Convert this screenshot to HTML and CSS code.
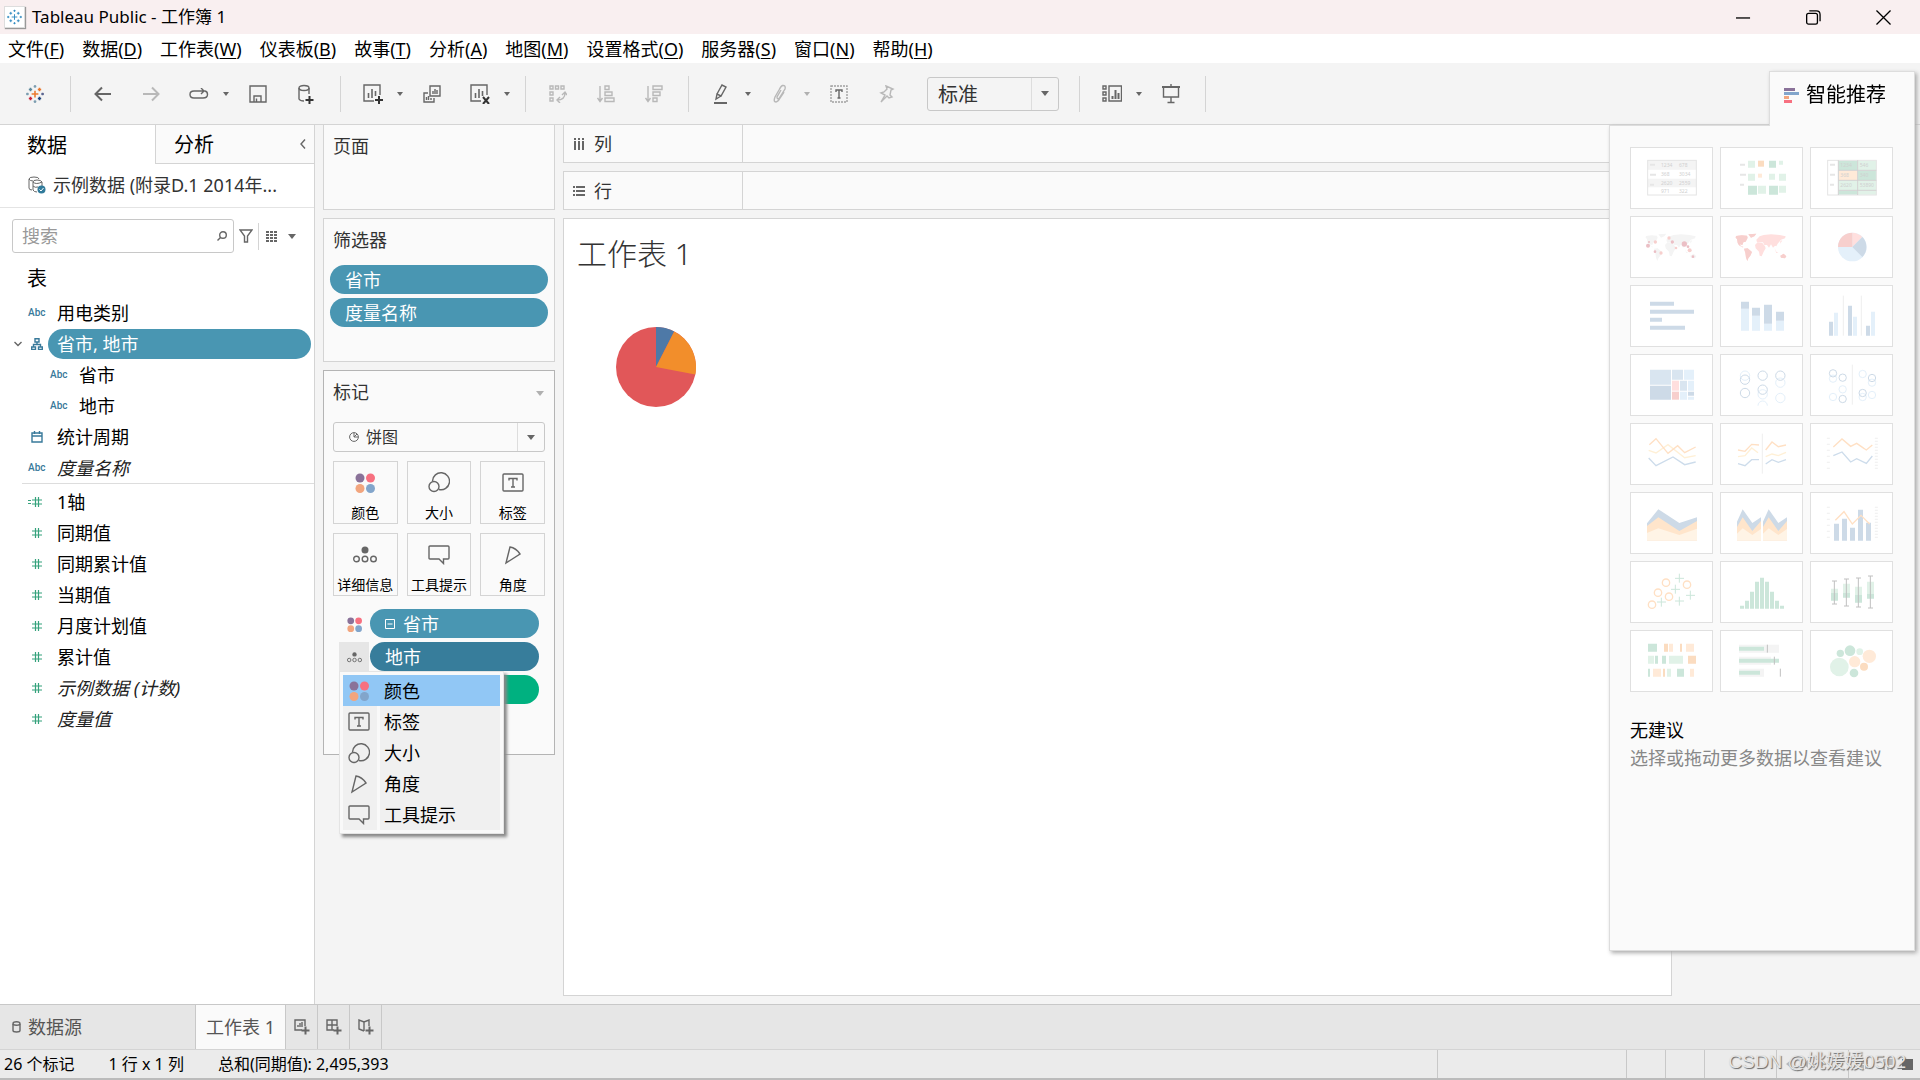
FILE: index.html
```html
<!DOCTYPE html>
<html lang="zh-CN">
<head>
  <meta charset="UTF-8" />
  <meta name="viewport" content="width=device-width, initial-scale=1.0"/>
  <title>Tableau Public - 工作簿 1</title>
  <link rel="stylesheet" href="styles.css">
</head>
<body>

  <!-- Shared icons -->
  <svg class="defs" width="0" height="0">
    <symbol id="i-color" viewBox="0 0 20 20">
      <g stroke="none">
        <circle cx="5" cy="5" r="4.500" fill="#8a7299"/><circle cx="15.500" cy="5" r="4.500" fill="#f77080"/>
        <circle cx="5" cy="15.500" r="4.500" fill="#f2a57e"/><circle cx="15.500" cy="15.500" r="4.500" fill="#82a5cb"/>
      </g>
    </symbol>
    <symbol id="i-size" viewBox="0 0 22 22">
      <path d="M4.500 10A8.500 8.500 0 1 1 11 18.500" /><circle cx="6" cy="15.500" r="5"/>
    </symbol>
    <symbol id="i-label" viewBox="0 0 22 20">
      <rect x="1" y="1" width="20" height="17" rx="1"/><path d="M7 7.500V5.500H15V7.500M11 5.500V14M9 14H13"/>
    </symbol>
    <symbol id="i-tip" viewBox="0 0 22 20">
      <path d="M2 1H20Q21 1 21 2V13Q21 14 20 14H15.500V18.500L11 14H2Q1 14 1 13V2Q1 1 2 1Z"/>
    </symbol>
    <symbol id="i-angle" viewBox="0 0 22 20">
      <path d="M8 2L4 18L18 9Q14 3 8 2Z"/>
    </symbol>
    <symbol id="i-detail" viewBox="0 0 24 20">
      <circle cx="12" cy="5" r="3.500" fill="#666" stroke="none"/><circle cx="3.500" cy="14" r="2.800"/><circle cx="12" cy="14" r="2.800"/><circle cx="20.500" cy="14" r="2.800"/>
    </symbol>
    <symbol id="i-hash" viewBox="0 0 18 12">
      <path d="M4 4H14M4 8H14M7.500 1V11M10.500 1V11"/>
    </symbol>
    <symbol id="i-marks" viewBox="0 0 16 16">
      <path d="M8 5V11M5 8H11M4 2.500V5.500M2.500 4H5.500M12 2.500V5.500M10.500 4H13.500M4 10.500V13.500M2.500 12H5.500M12 10.500V13.500M10.500 12H13.500M8 0V2.500M6.800 1.300H9.200M8 13.500V16M6.800 14.700H9.200M1.300 6.800V9.200M0 8H2.500M14.700 6.800V9.200M13.500 8H16"/>
    </symbol>
    <symbol id="i-world" viewBox="0 0 243 180">
      <path d="M45 57L62 55L78 56L80 62L74 74L67 76L64 84L56 82L60 88L68 90L64 91L54 85L50 78L48 66L44 62Z"/>
      <path d="M82 52L106 50L100 58L90 62Z"/>
      <path d="M69 95L80 94L93 105L88 116L82 124L79 132L75 122L73 108Z"/>
      <path d="M110 76L124 78L132 88L134 94L128 104L122 118L116 116L114 104L104 94L102 84Z"/>
      <path d="M106 68L116 58L128 54L150 52L176 54L194 58L192 64L180 68L170 80L166 88L162 86L156 92L150 82L144 92L138 84L130 84L126 76L108 76Z"/>
      <path d="M160 92L166 104L172 108L166 108ZM178 116L188 110L196 118L192 124L180 122ZM178 72L184 70L178 80Z"/>
    </symbol>
  </svg>

  <!-- Title bar -->
  <header class="titlebar">
    <svg class="app-icon" viewBox="0 0 16 16"><use href="#i-marks"/></svg>
    <h1>Tableau Public - 工作簿 1</h1>
    <div class="window-controls">
      <button aria-label="最小化"><svg viewBox="0 0 16 16"><path d="M0 8.500H15"/></svg></button>
      <button aria-label="还原"><svg viewBox="0 0 16 16"><rect x="0.700" y="3.500" width="11.500" height="11.500" rx="2"/><path d="M3.500 1H11Q15 1 15 5V12"/></svg></button>
      <button aria-label="关闭"><svg viewBox="0 0 16 16"><path d="M0.500 0.500L15.500 15.500M15.500 0.500L0.500 15.500"/></svg></button>
    </div>
  </header>

  <!-- Menu -->
  <nav class="menubar">
    <button>文件(<u>F</u>)</button>
    <button>数据(<u>D</u>)</button>
    <button>工作表(<u>W</u>)</button>
    <button>仪表板(<u>B</u>)</button>
    <button>故事(<u>T</u>)</button>
    <button>分析(<u>A</u>)</button>
    <button>地图(<u>M</u>)</button>
    <button>设置格式(<u>O</u>)</button>
    <button>服务器(<u>S</u>)</button>
    <button>窗口(<u>N</u>)</button>
    <button>帮助(<u>H</u>)</button>
  </nav>

  <!-- Toolbar -->
  <div class="toolbar">
    <div class="group start">
      <button aria-label="开始"><svg width="18" height="20" viewBox="0 0 16 16">
        <path d="M8 5V11M5 8H11" stroke="#eb7a2e"/><path d="M4 2.500V5.500M2.500 4H5.500" stroke="#5b879b"/><path d="M12 2.500V5.500M10.500 4H13.500" stroke="#e8762c"/>
        <path d="M4 10.500V13.500M2.500 12H5.500" stroke="#c72037"/><path d="M12 10.500V13.500M10.500 12H13.500" stroke="#1f447c"/>
        <path d="M8 0V2.500M6.800 1.300H9.200M8 13.500V16M6.800 14.700H9.200M1.300 6.800V9.200M0 8H2.500" stroke="#7c9db0"/><path d="M14.700 6.800V9.200M13.500 8H16" stroke="#5b6591"/>
      </svg></button>
    </div>
    <div class="group">
      <button aria-label="撤消"><svg width="18" height="16" viewBox="0 0 18 16"><path stroke-width="2" d="M17 8H2M8 1.500L1.500 8L8 14.500"/></svg></button>
      <button class="off" aria-label="重做"><svg width="18" height="16" viewBox="0 0 18 16"><path stroke-width="2" d="M1 8H16M10 1.500L16.500 8L10 14.500"/></svg></button>
      <button aria-label="恢复"><svg width="20" height="12" viewBox="0 0 20 12"><path d="M11 3H5Q1 3 1 6.500T5 10H14Q18.500 10 18.500 6.500Q18.500 3.500 16 3H11M12 0L15 3L12 6"/></svg></button>
      <button class="caret" aria-label="恢复选项"></button>
      <button aria-label="保存"><svg width="18" height="18" viewBox="0 0 18 18"><path d="M1 1H17V17H1ZM5 17V11H12V17M7.500 13.500V17"/></svg></button>
      <button aria-label="新建数据源"><svg width="18" height="20" viewBox="0 0 18 20"><ellipse cx="7" cy="4" rx="5" ry="2.500"/><path d="M2 4V15Q3 17 7 17M12 4V10"/><path stroke="#333" stroke-width="2" d="M12.500 12V20M8.500 16H16.500"/></svg></button>
    </div>
    <div class="group">
      <button aria-label="新建工作表"><svg width="20" height="20" viewBox="0 0 20 20"><path d="M11 17H1V1H17V11"/><path stroke-width="1.600" d="M5.500 14V9M9 14V5M12.500 12V7"/><path stroke="#333" stroke-width="2" d="M16 12V20M12 16H20"/></svg></button>
      <button class="caret" aria-label="新建选项"></button>
      <button aria-label="复制"><svg width="18" height="18" viewBox="0 0 18 18"><path d="M7 1H17V11H7ZM5 8H1V17H11V13M10 9V6M12 9V4M14 9V5M3.500 15V12M5.500 15V11M8 15V13"/></svg></button>
      <button aria-label="清除工作表"><svg width="20" height="20" viewBox="0 0 20 20"><path d="M11 17H1V1H17V11"/><path stroke-width="1.600" d="M5.500 14V9M9 14V5M12.500 12V7"/><path stroke="#333" stroke-width="2" d="M13 13L19 20M19 13L13 20"/></svg></button>
      <button class="caret" aria-label="清除选项"></button>
    </div>
    <div class="group">
      <button class="off" aria-label="交换行和列"><svg width="18" height="18" viewBox="0 0 18 18"><path d="M1 1H4V4H1ZM6.500 1H9.500V4H6.500ZM12 1H15V4H12ZM1 7H4V10H1ZM1 13H4V16H1ZM8 15Q16 15 16 8M11 12L8 15L11 18M13 10L16 7L18 10"/></svg></button>
      <button class="off" aria-label="升序排序"><svg width="18" height="18" viewBox="0 0 18 18"><path d="M3 1V16M0.500 13L3 16.500L5.500 13M8 1H12V4.500H8ZM8 7H15V10.500H8ZM8 13H17V16.500H8Z"/></svg></button>
      <button class="off" aria-label="降序排序"><svg width="18" height="18" viewBox="0 0 18 18"><path d="M3 1V16M0.500 13L3 16.500L5.500 13M8 1H17V4.500H8ZM8 7H15V10.500H8ZM8 13H12V16.500H8Z"/></svg></button>
    </div>
    <div class="group">
      <button aria-label="突出显示"><svg width="16" height="20" viewBox="0 0 16 20"><path d="M4 10L9 1L13 3L8 12L4 10L3 15L8 12M3 15"/><path stroke-width="2" d="M1 19H14"/></svg></button>
      <button class="caret" aria-label="突出显示选项"></button>
      <button class="off" aria-label="组成员"><svg width="16" height="20" viewBox="0 0 16 20"><path d="M9 6L5 13Q5 15.500 7 14.500L13 5Q14 1 10.500 1.500Q9 2 7 6L3 13Q1 18 4 18Q6 18 8 14L12 8"/></svg></button>
      <button class="caret off" aria-label="组选项"></button>
      <button aria-label="显示标记标签"><svg width="18" height="18" viewBox="0 0 18 18"><rect x="1" y="1" width="16" height="16" stroke="#a0a0a0" stroke-dasharray="2 1"/><path d="M6 7V5H12V7M9 5V13M7.500 13H10.500"/></svg></button>
      <button class="off" aria-label="固定轴"><svg width="16" height="18" viewBox="0 0 16 18"><path d="M7 1L14 4L12 5L11 10L13 12L10 13L8 11L2 17L6 10L2 8L5 7L8 4Z"/></svg></button>
      <div class="select fit">
        <select aria-label="适合"><option>标准</option></select>
      </div>
    </div>
    <div class="group">
      <button aria-label="显示卡"><svg width="20" height="18" viewBox="0 0 20 18"><path d="M1 1H4V4H1ZM1 7H4V10H1ZM1 13H4V16H1ZM7 1H19.500V16H7Z"/><path stroke-width="2" d="M10.500 14V11M13.500 14V5M16.500 14V8"/></svg></button>
      <button class="caret" aria-label="卡选项"></button>
      <button aria-label="演示模式"><svg width="18" height="20" viewBox="0 0 18 20"><path stroke-width="2" d="M0 3H18"/><path d="M9 0V2M1.500 3V13H16.500V3M9 13V18M5.500 18.500H12.500"/></svg></button>
    </div>
  </div>

  <!-- Workspace -->
  <main class="workspace">

    <aside class="data-pane">
      <div class="pane-tabs">
        <button class="active">数据</button>
        <button>分析</button>
        <svg width="6" height="10" viewBox="0 0 6 10"><path d="M5 0.500L1 5L5 9.500"/></svg>
      </div>
      <div class="source">
        <svg width="18" height="18" viewBox="0 0 18 18"><path d="M11 3Q11 1 6 1T1 3V12Q1 14 4 14M1 3Q2 5 5 5M5 6Q5 4 9 4T14 6V10M5 6V14Q6 16 9 16M5 6Q8 9 14 6M5 10Q7 12 10 11"/><circle cx="13.500" cy="13.500" r="4" fill="#317b9b" stroke="none"/><path stroke="#fff" d="M11.500 13.500L13 15L15.500 12"/></svg>
        <span>示例数据 (附录D.1 2014年...</span>
      </div>
      <div class="search-row">
        <div class="search">
          <input type="text" placeholder="搜索" aria-label="搜索">
          <svg width="10" height="10" viewBox="0 0 10 10"><circle cx="6" cy="4" r="3.300"/><path d="M3.500 6.500L0.500 9.500"/></svg>
        </div>
        <button aria-label="筛选字段"><svg width="14" height="14" viewBox="0 0 14 14"><path d="M1 1H13L8.500 7V13H5.500V7Z"/></svg></button>
        <button class="view" aria-label="查看方式"><svg width="12" height="11" viewBox="0 0 12 11"><path stroke-width="2" stroke-dasharray="3 1" d="M0 1H12M0 4H12M0 7H12M0 10H12"/></svg></button>
        <button class="caret" aria-label="菜单"></button>
      </div>

      <h2>表</h2>
      <ul class="fields">
        <li><i class="abc">Abc</i><span>用电类别</span></li>
        <li class="selected">
          <svg class="chevron" width="8" height="6" viewBox="0 0 8 6"><path d="M0.500 1L4 4.500L7.500 1"/></svg>
          <svg class="dim" width="12" height="12" viewBox="0 0 12 12"><path d="M4 0.700H8V4H4ZM6 4V6.500M2.500 9V6.500H9.500V9M0.700 9H4.500V11.500H0.700ZM7.500 9H11.300V11.500H7.500Z"/></svg>
          <span>省市, 地市</span>
        </li>
        <li class="child"><i class="abc">Abc</i><span>省市</span></li>
        <li class="child"><i class="abc">Abc</i><span>地市</span></li>
        <li><svg class="dim" width="12" height="12" viewBox="0 0 12 12"><path d="M1 2H11V11H1ZM1 5H11M3.500 0V3M8.500 0V3"/></svg><span>统计周期</span></li>
        <li class="italic"><i class="abc">Abc</i><span>度量名称</span></li>
      </ul>
      <ul class="fields measures">
        <li><svg class="mea" width="18" height="12" viewBox="0 0 18 12"><use href="#i-hash"/><path d="M0 4.500H3M0 7.500H3"/></svg><span>1轴</span></li>
        <li><svg class="mea" width="18" height="12"><use href="#i-hash"/></svg><span>同期值</span></li>
        <li><svg class="mea" width="18" height="12"><use href="#i-hash"/></svg><span>同期累计值</span></li>
        <li><svg class="mea" width="18" height="12"><use href="#i-hash"/></svg><span>当期值</span></li>
        <li><svg class="mea" width="18" height="12"><use href="#i-hash"/></svg><span>月度计划值</span></li>
        <li><svg class="mea" width="18" height="12"><use href="#i-hash"/></svg><span>累计值</span></li>
        <li class="italic"><svg class="mea" width="18" height="12"><use href="#i-hash"/></svg><span>示例数据 (计数)</span></li>
        <li class="italic"><svg class="mea" width="18" height="12"><use href="#i-hash"/></svg><span>度量值</span></li>
      </ul>
    </aside>

    <section class="cards">
      <div class="card pages"><h3>页面</h3></div>

      <div class="card filters">
        <h3>筛选器</h3>
        <button class="pill">省市</button>
        <button class="pill">度量名称</button>
      </div>

      <div class="card marks">
        <div class="marks-head"><h3>标记</h3><button class="caret off" aria-label="标记菜单"></button></div>
        <div class="select mark-type">
          <svg width="10" height="10" viewBox="0 0 10 10"><circle cx="5" cy="5" r="4.400"/><path d="M5 1V5H9M5 5L8 2"/></svg>
          <select aria-label="标记类型"><option>饼图</option></select>
        </div>
        <div class="mark-buttons">
          <button><svg width="20" height="20"><use href="#i-color"/></svg>颜色</button>
          <button><svg width="22" height="22"><use href="#i-size"/></svg>大小</button>
          <button><svg width="22" height="20"><use href="#i-label"/></svg>标签</button>
          <button><svg width="24" height="20"><use href="#i-detail"/></svg>详细信息</button>
          <button><svg width="22" height="20"><use href="#i-tip"/></svg>工具提示</button>
          <button><svg width="22" height="20"><use href="#i-angle"/></svg>角度</button>
        </div>
        <div class="encodings">
          <div class="encoding">
            <button class="role" aria-label="颜色"><svg width="15" height="15"><use href="#i-color"/></svg></button>
            <button class="pill"><svg width="10" height="10" viewBox="0 0 10 10"><path d="M0.500 0.500H9.500V9.500H0.500ZM2.500 5H7.500"/></svg>省市</button>
          </div>
          <div class="encoding">
            <button class="role open" aria-label="详细信息"><svg width="15" height="13"><use href="#i-detail"/></svg></button>
            <button class="pill dark">地市</button>
            <ul class="popup">
              <li class="hover"><button><svg width="20" height="20"><use href="#i-color"/></svg><span>颜色</span></button></li>
              <li><button><svg width="22" height="20"><use href="#i-label"/></svg><span>标签</span></button></li>
              <li><button><svg width="22" height="22"><use href="#i-size"/></svg><span>大小</span></button></li>
              <li><button><svg width="22" height="20"><use href="#i-angle"/></svg><span>角度</span></button></li>
              <li><button><svg width="22" height="20"><use href="#i-tip"/></svg><span>工具提示</span></button></li>
            </ul>
          </div>
          <div class="encoding">
            <button class="role" aria-label="角度"></button>
            <button class="pill green" aria-label="总和(同期值)"></button>
          </div>
        </div>
      </div>
    </section>

    <section class="view-area">
      <div class="shelf">
        <div class="shelf-name"><svg width="12" height="12" viewBox="0 0 12 12"><path stroke-width="2" d="M2 0V2M6 0V2M10 0V2M2 3V12M6 3V12M10 3V12"/></svg>列</div>
      </div>
      <div class="shelf">
        <div class="shelf-name"><svg width="12" height="12" viewBox="0 0 12 12"><path stroke-width="2" d="M0 2H2M0 6H2M0 10H2M3 2H12M3 6H12M3 10H12"/></svg>行</div>
      </div>
      <div class="sheet">
        <h2>工作表 1</h2>
        <svg class="pie" width="80" height="80" viewBox="-40 -40 80 80">
          <circle r="40" fill="#e15759"/>
          <path fill="#4e79a7" d="M0 0V-40A40 40 0 0 1 18.200 -35.600Z"/>
          <path fill="#f28e2b" d="M0 0L18.200 -35.600A40 40 0 0 1 39.300 7.600Z"/>
        </svg>
      </div>
    </section>
  </main>

  <!-- Sheet tabs -->
  <div class="sheet-tabs">
    <button class="datasource"><svg width="9" height="12" viewBox="0 0 9 12"><path d="M1 3V9.500Q1 11 4.500 11T8 9.500V3"/><ellipse cx="4.500" cy="2.500" rx="3.500" ry="1.800"/></svg>数据源</button>
    <button class="active">工作表 1</button>
    <button class="new" aria-label="新建工作表"><svg width="16" height="16" viewBox="0 0 16 16"><path d="M8 11H1V1H11V7M4 8V6M6 8V4M8 8V3"/><path stroke-width="2" d="M11.500 7.500V15.500M7.500 11.500H15.500"/></svg></button>
    <button class="new" aria-label="新建仪表板"><svg width="16" height="16" viewBox="0 0 16 16"><path d="M8 11H1V1H11V7M1 6H11M6 1V11"/><path stroke-width="2" d="M11.500 7.500V15.500M7.500 11.500H15.500"/></svg></button>
    <button class="new" aria-label="新建故事"><svg width="16" height="16" viewBox="0 0 16 16"><path d="M6 12L1 10V1L6 3L11 1V7M6 3V12"/><path stroke-width="2" d="M11.500 7.500V15.500M7.500 11.500H15.500"/></svg></button>
  </div>

  <!-- Status bar -->
  <footer class="status">
    <span>26 个标记</span>
    <span>1 行 x 1 列</span>
    <span>总和(同期值): 2,495,393</span>
    <div class="status-cells">
      <i class="wide"></i><i></i><i></i>
      <i class="mid"></i>
      <i class="mid"><svg width="55" height="10" viewBox="0 0 55 10"><path fill="#b8b8b8" d="M5 1V9L0 5ZM22 1V9L17 5ZM34 1V9L39 5Z"/></svg></i>
      <i class="mid"><svg width="54" height="11" viewBox="0 0 54 11"><path fill="#b8b8b8" d="M2 1h3v4h-3zM6 1h3v4h-3zM2 6h3v4h-3zM6 6h3v4h-3zM24 0h10v6h-10zM24 8h2v3h-2zM28 8h2v3h-2zM32 8h2v3h-2z"/><path fill="#666" d="M43 0H54V11H43Z"/></svg></i>
    </div>
    <div class="watermark">CSDN @姚媛媛0502</div>
  </footer>

  <!-- Show Me -->
  <aside class="show-me">
    <button class="show-me-tab">
      <svg width="15" height="15" viewBox="0 0 15 15"><path fill="#8a7299" d="M0 0H11V3H0Z"/><path fill="#82a5cb" d="M0 4H15V7H0Z"/><path fill="#f2a57e" d="M0 8H5V11H0Z"/><path fill="#f77080" d="M0 12H8V15H0Z"/></svg>智能推荐
    </button>
    <div class="show-me-body">
      <div class="charts">
        <button disabled aria-label="文本表"><svg viewBox="0 0 243 180"><path class="gray" d="M50 37H196V65H50ZM50 92H196V118H50Z"/><path class="dash" d="M57 47H72V53H57ZM57 77H75V83H57ZM57 107H69V113H57Z"/><rect class="frame" x="50" y="37" width="146" height="104"/><g class="num"><text x="90" y="57">1234</text><text x="144" y="57">678</text><text x="90" y="84">368</text><text x="144" y="84">3034</text><text x="90" y="111">2620</text><text x="144" y="111">2559</text><text x="90" y="135">971</text><text x="144" y="135">322</text></g></svg></button>
        <button disabled aria-label="热图"><svg viewBox="0 0 243 180"><path class="dash" d="M57 47H72V53H57ZM57 77H75V83H57ZM57 107H69V113H57Z"/><path class="green1" d="M81 38h21v21h-21zM174 38h12v12h-12zM81 77h21v21h-21zM144 77h18v18h-18zM174 77h21v21h-21zM111 113h24v24h-24zM174 113h21v21h-21z"/><path class="green2" d="M144 38h21v21h-21zM81 113h27v27h-27zM144 113h27v27h-27z"/><path class="orange2" d="M111 38h18v18h-18z"/><path class="orange1" d="M111 77h12v12h-12z"/></svg></button>
        <button disabled aria-label="突出显示表"><svg viewBox="0 0 243 180"><path class="dash" d="M57 47H72V53H57ZM57 77H72V83H57ZM57 107H69V113H57Z"/><path class="green2" d="M83 38h56v28h-56zM141 68h55v28h-55zM83 128h56v12h-56z"/><path class="green1" d="M141 38h55v28h-55zM83 98h56v28h-56zM141 98h55v28h-55zM141 128h55v12h-55z"/><path class="orange1" d="M83 68h56v28h-56z"/><rect class="frame" x="50" y="37" width="146" height="104"/><path class="grid" d="M82 37V141M140 37V141M82 67H196M82 97H196M82 127H196"/><g class="num"><text x="88" y="56">1234</text><text x="146" y="56">546</text><text x="88" y="86">368</text><text x="146" y="86">340</text><text x="88" y="117">2620</text><text x="146" y="117">53890</text></g></svg></button>

        <button disabled aria-label="符号地图"><svg viewBox="0 0 243 180"><use class="gray" href="#i-world"/><g class="red3"><circle cx="51" cy="86" r="6"/><circle cx="54" cy="75" r="3"/><circle cx="72" cy="104" r="4"/><circle cx="124" cy="75" r="5"/><circle cx="160" cy="81" r="8"/><circle cx="171" cy="89" r="4"/><circle cx="186" cy="119" r="4"/></g><g class="red2"><circle cx="73" cy="75" r="5"/><circle cx="90" cy="108" r="5"/><circle cx="114" cy="63" r="5"/><circle cx="135" cy="93" r="4"/><circle cx="176" cy="100" r="6"/></g></svg></button>
        <button disabled aria-label="填充地图"><svg viewBox="0 0 243 180"><use class="red1" href="#i-world"/><path class="red2" d="M45 57L62 55L78 56L80 62L74 74L67 76L64 84L56 82L60 88L68 90L64 91L54 85L50 78L48 66L44 62ZM82 52L106 50L100 58L90 62ZM69 95L80 94L93 105L88 116L82 124L79 132L75 122L73 108ZM178 116L188 110L196 118L192 124L180 122Z"/></svg></button>
        <button disabled aria-label="饼图"><svg viewBox="0 0 243 180"><circle class="blue1" cx="124" cy="90" r="43"/><path class="red1" d="M124 90V47A43 43 0 0 1 154 60Z"/><path class="blue3" d="M124 90L154 60A43 43 0 0 1 154 120Z"/><path class="red2" d="M124 90H81A43 43 0 0 1 124 47Z"/></svg></button>

        <button disabled aria-label="水平条"><svg viewBox="0 0 243 180"><path class="blue3" d="M57 47h72v12h-72zM57 71h132v12h-132zM57 95h36v12h-36zM57 119h105v12h-105z"/></svg></button>
        <button disabled aria-label="堆叠条"><svg viewBox="0 0 243 180"><path class="blue1" d="M60 68h24v66h-24zM93 89h24v45h-24zM129 113h24v21h-24zM165 104h24v30h-24z"/><path class="blue3" d="M60 47h24v21h-24zM93 65h24v24h-24zM129 56h24v57h-24zM165 77h24v27h-24z"/></svg></button>
        <button disabled aria-label="并排条"><svg viewBox="0 0 243 180"><path class="rule" d="M97 29V149M151 29V149"/><path class="blue3" d="M54 107h12v42h-12zM111 59h12v90h-12zM165 119h12v30h-12z"/><path class="blue1" d="M69 80h12v69h-12zM126 92h12v57h-12zM180 77h12v72h-12z"/></svg></button>

        <button disabled aria-label="树状图"><svg viewBox="0 0 243 180"><path class="blue2" d="M57 44h63v45h-63zM123 44h33v30h-33zM147 77h21v30h-21z"/><path class="blue3" d="M57 92h63v42h-63zM171 110h18v12h-18z"/><path class="blue1" d="M159 44h30v30h-30zM171 77h18v30h-18zM147 110h21v24h-21zM171 125h18v9h-18z"/><path class="red1" d="M123 77h21v30h-21z"/><path class="red2" d="M123 110h21v24h-21z"/></svg></button>
        <button disabled aria-label="圆视图"><svg viewBox="0 0 243 180"><g class="ring light"><circle cx="72" cy="62" r="14"/><circle cx="125" cy="118" r="14"/><circle cx="178" cy="83" r="14"/><circle cx="178" cy="129" r="14"/><path d="M111 152A14 14 0 0 1 139 152"/></g><g class="ring"><circle cx="72" cy="74" r="14"/><circle cx="72" cy="114" r="14"/><circle cx="125" cy="62" r="14"/><circle cx="125" cy="104" r="14"/><circle cx="178" cy="62" r="14"/></g></svg></button>
        <button disabled aria-label="并排圆"><svg viewBox="0 0 243 180"><path class="rule" d="M124 29V149"/><g class="ring light"><circle cx="66" cy="71" r="11"/><circle cx="95" cy="103" r="11"/><circle cx="66" cy="126" r="11"/><circle cx="155" cy="57" r="11"/><circle cx="183" cy="83" r="11"/><circle cx="155" cy="126" r="11"/><circle cx="183" cy="120" r="11"/></g><g class="ring"><circle cx="66" cy="55" r="11"/><circle cx="95" cy="68" r="11"/><circle cx="95" cy="132" r="11"/><circle cx="183" cy="69" r="11"/><circle cx="155" cy="114" r="11"/></g></svg></button>

        <button disabled aria-label="线(连续)"><svg viewBox="0 0 243 180"><path class="line y" d="M53 79L75 87L111 62L161 101L194 95"/><path class="line o" d="M55 62L75 44L111 88L140 65L161 86L194 69"/><path class="line b" d="M53 102L75 125L126 99L161 122L194 114"/></svg></button>
        <button disabled aria-label="线(离散)"><svg viewBox="0 0 243 180"><path class="rule" d="M124 29V149"/><path class="line y" d="M51 98L72 95L92 72L111 86M134 98L153 90L172 95L195 85"/><path class="line o" d="M51 78L72 82L92 61L114 63M134 78L153 54L172 68L195 63"/><path class="line b" d="M51 119L72 125L92 107L114 107M134 120L153 107L172 115L195 107"/></svg></button>
        <button disabled aria-label="双线"><svg viewBox="0 0 243 180"><path class="ticks" d="M52 41V135"/><path class="ticks dense" d="M196 41V135"/><path class="line o" d="M67 69L93 45L119 67L137 58L166 78L184 63"/><path class="line b" d="M67 95L93 84L119 114L137 104L166 118L184 96"/></svg></button>

        <button disabled aria-label="面积图(连续)"><svg viewBox="0 0 243 180"><path class="blue3" d="M48 91L82 49L145 90L198 73V143H48Z"/><path class="area2" d="M48 99L82 73L145 114L198 84V143H48Z"/><path class="area1" d="M48 120L82 106L145 126L198 107V143H48Z"/></svg></button>
        <button disabled aria-label="面积图(离散)"><svg viewBox="0 0 243 180"><path class="blue3" d="M48 86L65 49L94 90L120 73V143H48ZM126 86L143 49L172 90L198 73V143H126Z"/><path class="area2" d="M48 102L65 73L94 114L120 84V143H48ZM126 102L143 73L172 114L198 84V143H126Z"/><path class="area1" d="M48 122L65 106L94 126L120 108V143H48ZM126 122L143 106L172 126L198 108V143H126Z"/></svg></button>
        <button disabled aria-label="双组合"><svg viewBox="0 0 243 180"><path class="ticks" d="M52 41V135"/><path class="ticks dense" d="M196 41V135"/><path class="blue3" d="M69 92h15v51h-15zM93 77h15v66h-15zM117 104h15v39h-15zM141 50h15v93h-15zM165 89h15v54h-15z"/><path class="line o" d="M73 82L99 56L124 93L150 67L176 93"/></svg></button>

        <button disabled aria-label="散点图"><svg viewBox="0 0 243 180"><g class="line o"><circle cx="105" cy="62" r="11"/><circle cx="168" cy="68" r="11"/><circle cx="81" cy="92" r="11"/><circle cx="114" cy="104" r="11"/><circle cx="63" cy="128" r="11"/></g><path class="plus" d="M132 49h27M145 35v27M120 82h27M133 68v27M165 100h27M178 86v27M78 120h27M91 107v27M132 117h27M145 104v27"/></svg></button>
        <button disabled aria-label="直方图"><svg viewBox="0 0 243 180"><path class="green2" d="M57 131h12v9h-12zM72 116h12v24h-12zM87 89h12v51h-12zM102 59h12v81h-12zM117 47h12v93h-12zM132 59h12v81h-12zM147 89h12v51h-12zM162 116h12v24h-12zM177 131h12v9h-12z"/></svg></button>
        <button disabled aria-label="盒须图"><svg viewBox="0 0 243 180"><path class="green1" d="M60 80h21v12h-21zM96 65h21v27h-21zM132 74h21v24h-21zM168 59h21v36h-21z"/><path class="green2" d="M60 92h21v24h-21zM96 92h21v15h-21zM132 98h21v24h-21zM168 95h21v15h-21z"/><path class="whisker" d="M70 57V126M63 57H78M63 126H78M106 51V132M99 51H114M99 132H114M142 48V135M135 48H150M135 135H150M178 42V138M171 42H186M171 138H186"/></svg></button>

        <button disabled aria-label="甘特图"><svg viewBox="0 0 243 180"><path class="green2" d="M51 38h27v24h-27zM72 74h9v24h-9zM93 74h12v24h-12zM51 113h6v24h-6zM138 113h21v24h-21z"/><path class="green1" d="M51 74h18v24h-18zM114 74h42v24h-42zM108 113h12v24h-12z"/><path class="orange2" d="M99 38h12v24h-12zM147 38h6v24h-6zM171 74h24v24h-24zM96 113h6v24h-6z"/><path class="orange1" d="M114 38h12v24h-12zM165 38h24v24h-24zM66 113h24v24h-24zM177 113h12v24h-12z"/></svg></button>
        <button disabled aria-label="靶心图"><svg viewBox="0 0 243 180"><path class="gray" d="M54 41h120v24h-120zM54 77h96v24h-96zM54 113h75v24h-75z"/><path class="green2" d="M54 47h75v12h-75zM54 83h120v12h-120zM54 119h63v12h-63z"/><path class="whisker" d="M139 41V65M160 77V101M178 113V137"/></svg></button>
        <button disabled aria-label="填充气泡图"><svg viewBox="0 0 243 180"><g class="green1"><circle cx="85" cy="108" r="28"/><circle cx="146" cy="62" r="10"/></g><g class="green2"><circle cx="88" cy="67" r="11"/><circle cx="117" cy="59" r="16"/><circle cx="129" cy="126" r="13"/></g><g class="orange1"><circle cx="131" cy="92" r="17"/><circle cx="175" cy="76" r="20"/></g><circle class="orange2" cx="159" cy="107" r="12"/></svg></button>
      </div>
      <h4>无建议</h4>
      <p>选择或拖动更多数据以查看建议</p>
    </div>
  </aside>

</body>
</html>
```

FILE: styles.css
```css
:root {
  --line: #d4d4d4;
  --bg: #f4f4f4;
  --card: #fafafa;
  --pill: #4996b2;
  --icon: #666;
}

* {
  box-sizing: border-box;
}

body {
  margin: 0;
  height: 100vh;
  position: relative;
  display: flex;
  flex-direction: column;
  overflow: hidden;
  background: var(--bg);
  color: #000;
  font-family: "Noto Sans", "Noto Sans CJK SC", sans-serif;
  font-size: 18px;
  line-height: 24px;
}

h1, h2, h3, h4, p, ul {
  margin: 0;
  padding: 0;
  font-weight: 400;
}

ul {
  list-style: none;
}

button, select, input {
  margin: 0;
  padding: 0;
  border: none;
  border-radius: 0;
  background: none;
  color: inherit;
  font: inherit;
}

svg {
  flex: none;
  fill: none;
  stroke: var(--icon);
  stroke-width: 1.4;
}

.defs {
  position: absolute;
}

/* title bar + menu */
.titlebar {
  display: flex;
  align-items: center;
  height: 34px;
  padding: 0 2px 0 4px;
  background: #f9eff0;
}

.app-icon {
  width: 21px;
  height: 22px;
  padding: 2px;
  margin-right: 7px;
  background: #fff;
  border: 1px solid #ddd;
  box-shadow: 1px 1px 1px #999;
  stroke: #2f8ac0;
  stroke-width: 1;
}

.titlebar h1 {
  flex: 1;
  font-size: 17px;
}

.window-controls {
  display: flex;
}

.window-controls button {
  width: 70px;
  height: 34px;
  display: flex;
  align-items: center;
  justify-content: center;
}

.window-controls svg {
  width: 15px;
  height: 15px;
  stroke: #000;
}

.menubar {
  display: flex;
  height: 29px;
  background: #fff;
}

.menubar button {
  padding: 0 10px 0 8px;
}

.menubar u {
  text-underline-offset: 2px;
}

/* toolbar */
.toolbar {
  display: flex;
  align-items: center;
  height: 62px;
  border-bottom: 1px solid var(--line);
}

.group {
  display: flex;
  align-items: center;
  height: 36px;
  padding: 0 10px 0 8px;
  border-right: 1px solid var(--line);
}

.group.start {
  padding: 0 11px;
}

.group > button {
  width: 48px;
  height: 32px;
  display: flex;
  align-items: center;
  justify-content: center;
}

button.off svg {
  stroke: #b8b8b8;
}

button.caret {
  width: 11px;
  display: flex;
  align-items: center;
  justify-content: center;
}

.group > button.caret {
  width: 11px;
  justify-content: flex-start;
}

.caret::before, .select::after {
  content: "";
  border: 4px solid transparent;
  border-top: 5px solid var(--icon);
  border-bottom: 0;
}

.group > .caret::before {
  border-width: 4px 3px 0;
}

.caret.off::before {
  border-top-color: #b0b0b0;
}

.select {
  position: relative;
  display: flex;
  align-items: center;
  border: 1px solid #c8c8c8;
  border-radius: 3px;
}

.select select {
  appearance: none;
  flex: 1;
  height: 100%;
  color: #333;
  border-right: 1px solid #ddd;
}

.select::after {
  margin: 0 9px;
}

.fit {
  width: 132px;
  height: 34px;
  margin: 0 10px 0 16px;
}

.fit select {
  padding: 3px 0 0 10px;
  font-size: 20px;
}

/* workspace */
.workspace {
  flex: 1;
  min-height: 0;
  display: flex;
}

.data-pane {
  width: 315px;
  background: #fff;
  border-right: 1px solid var(--line);
}

.pane-tabs {
  position: relative;
  display: flex;
  height: 39px;
}

.pane-tabs button {
  flex: 1;
  padding: 2px 0 0 18px;
  text-align: left;
  font-size: 20px;
  background: var(--card);
  border: solid var(--line);
  border-width: 0 0 1px 1px;
}

.pane-tabs button.active {
  flex: none;
  width: 155px;
  padding-left: 27px;
  background: #fff;
  border: none;
}

.pane-tabs svg {
  position: absolute;
  right: 8px;
  top: 14px;
}

.source {
  display: flex;
  align-items: center;
  gap: 7px;
  height: 44px;
  padding: 0 0 2px 28px;
  color: #333;
  border-bottom: 1px solid #e4e4e4;
  white-space: nowrap;
}

.source svg, .mark-type svg {
  stroke-width: 1;
}

.search-row {
  display: flex;
  align-items: center;
  height: 34px;
  margin: 11px 17px 0 12px;
}

.search {
  flex: 1;
  min-width: 0;
  display: flex;
  align-items: center;
  height: 34px;
  padding: 0 6px 0 9px;
  border: 1px solid #c8c8c8;
  border-radius: 3px;
}

.search input {
  flex: 1;
  min-width: 0;
  outline: none;
}

.search input::placeholder {
  color: #999;
}

.search-row button {
  height: 27px;
  padding: 0 5px;
  display: flex;
  align-items: center;
}

.search-row .view {
  padding: 0 8px 0 7px;
  border-left: 1px solid var(--line);
}

.search-row .caret {
  padding: 0;
}

.data-pane h2 {
  padding: 14px 27px 6px;
  font-size: 20px;
}

.fields li {
  display: flex;
  align-items: center;
  height: 31px;
}

.fields li > :first-child:not(.chevron), .fields .dim {
  width: 18px;
  margin-left: 28px;
}

.fields li.child > :first-child {
  margin-left: 50px;
}

.fields span {
  flex: 1;
  margin-left: 2px;
  padding-left: 9px;
  line-height: 30px;
}

.abc {
  color: #38799a;
  font: 500 10px/12px Roboto, sans-serif;
}

.dim {
  stroke: #38799a;
}

.mea {
  stroke: #35a27c;
  stroke-width: 1.2;
}

.fields .chevron {
  margin-left: 14px;
}

.fields .selected .dim {
  margin-left: 6px;
}

.selected span {
  color: #fff;
  background: var(--pill);
  border-radius: 15px;
  margin-right: 3px;
}

.italic span {
  font-style: italic;
  color: #222;
}

.measures {
  margin: 0 0 0 22px;
  padding-top: 2px;
  border-top: 1px solid #ddd;
}

.fields.measures li > :first-child {
  margin-left: 6px;
}

/* cards column */
.cards {
  width: 232px;
  margin: 0 8px;
  display: flex;
  flex-direction: column;
  gap: 8px;
}

.card {
  padding: 0 6px;
  background: var(--card);
  border: 1px solid var(--line);
}

.card h3 {
  padding: 9px 3px 13px;
  font-size: 18px;
  color: #333;
}

.pages {
  min-height: 85px;
  border-top: none;
}

.filters {
  min-height: 144px;
}

.pill {
  display: flex;
  align-items: center;
  gap: 8px;
  width: 100%;
  height: 29px;
  padding-left: 15px;
  margin-bottom: 4px;
  color: #fff;
  background: var(--pill);
  border-radius: 15px;
}

.pill svg {
  stroke: #fff;
  stroke-width: 1;
}

.pill.dark {
  background: #377d9b;
}

.pill.green {
  background: #00b180;
}

.marks {
  padding: 0 9px;
  border-color: #b4b4b4;
  min-height: 385px;
}

.marks-head {
  display: flex;
  justify-content: space-between;
}

.marks-head h3 {
  padding: 9px 0 18px;
}

.marks-head .caret {
  height: 44px;
}

.mark-type {
  height: 30px;
}

.mark-type svg {
  position: absolute;
  left: 15px;
}

.mark-type select {
  padding-left: 32px;
  font-size: 16px;
}

.mark-buttons {
  display: grid;
  grid-template-columns: repeat(3, 1fr);
  gap: 9px;
  margin-top: 9px;
}

.mark-buttons button {
  height: 63px;
  display: flex;
  flex-direction: column;
  align-items: center;
  justify-content: flex-end;
  font-size: 14px;
  line-height: 20px;
  border: 1px solid var(--line);
  white-space: nowrap;
}

.mark-buttons svg {
  margin-bottom: 10px;
}

.encodings {
  margin: 13px 6px 0;
}

.encoding {
  position: relative;
  display: flex;
  gap: 1px;
}

.role {
  width: 30px;
  height: 30px;
  display: flex;
  align-items: center;
  justify-content: center;
}

.role.open {
  background: #e6e6e6;
}

.encoding .pill {
  flex: 1;
}

.encoding .role {
  flex: none;
}

/* drop menu over the marks card */
.popup {
  position: absolute;
  z-index: 5;
  top: 29px;
  left: 0;
  width: 165px;
  padding: 3px;
  background: #f9f9f9;
  border: 1px solid #e4e4e4;
  box-shadow: 3px 3px 3px #888;
}

.popup button {
  display: flex;
  align-items: center;
  width: 100%;
  height: 31px;
  text-align: left;
  background: linear-gradient(to right, #f0f0f0 34px, #f9f9f9 34px, #f9f9f9 37px, #f0f0f0 37px);
}

.popup .hover button {
  background: #91c7f5;
}

.popup svg {
  width: 22px;
  margin: 0 14px 0 5px;
}

/* view */
.view-area {
  flex: 1;
  display: flex;
  flex-direction: column;
  gap: 8px;
  margin-right: 248px;
  padding-bottom: 8px;
}

.shelf {
  height: 39px;
  background: var(--card);
  border: 1px solid var(--line);
}

.shelf:first-child {
  height: 38px;
  border-top: none;
}

.shelf-name {
  display: flex;
  align-items: center;
  gap: 9px;
  width: 179px;
  height: 100%;
  padding-left: 9px;
  color: #333;
  border-right: 1px solid var(--line);
}

.sheet {
  flex: 1;
  background: #fff;
  border: 1px solid var(--line);
}

.sheet h2 {
  padding: 15px 13px;
  font-size: 30px;
  font-weight: 300;
  line-height: 40px;
  color: #333;
}

.pie {
  display: block;
  stroke: none;
  margin: 38px 52px;
}

/* bottom bars */
.sheet-tabs {
  display: flex;
  height: 45px;
  background: #e6e6e6;
  border-top: 1px solid #c8c8c8;
  color: #555;
}

.sheet-tabs button {
  display: flex;
  align-items: center;
  justify-content: center;
  border-right: 1px solid #c8c8c8;
}

.sheet-tabs .datasource {
  width: 196px;
  justify-content: flex-start;
  gap: 7px;
  padding-left: 12px;
}

.sheet-tabs .active {
  width: 90px;
  background: var(--card);
}

.sheet-tabs .new {
  width: 32px;
}

.status {
  position: relative;
  display: flex;
  align-items: center;
  gap: 34px;
  height: 31px;
  padding-left: 4px;
  font-size: 16px;
  background: #ebebeb;
  border-top: 1px solid var(--line);
  border-bottom: 2px solid #bbb;
}

.status-cells {
  display: flex;
  align-self: stretch;
  margin-left: auto;
}

.status-cells i {
  width: 39px;
  border-left: 1px solid #c8c8c8;
}

.status-cells .wide {
  width: 189px;
}

.status-cells .mid {
  width: 72px;
  display: flex;
  align-items: center;
  justify-content: flex-end;
  padding-right: 7px;
}

.status-cells svg {
  stroke: none;
}

.watermark {
  position: absolute;
  right: 14px;
  top: 0;
  font-family: "Liberation Sans", "Noto Sans CJK SC", sans-serif;
  font-size: 19px;
  color: #e4e4e4;
  text-shadow: 1px 1px 1px #666;
}

/* show me */
.show-me {
  position: absolute;
  top: 71px;
  right: 5px;
  width: 306px;
  filter: drop-shadow(2px 2px 2px #aaa);
}

.show-me-tab {
  position: relative;
  z-index: 1;
  display: flex;
  align-items: center;
  gap: 7px;
  width: 146px;
  height: 55px;
  margin-left: auto;
  padding: 0 0 8px 14px;
  font-size: 20px;
  background: var(--card);
  border: 1px solid #ddd;
  border-bottom: none;
}

.show-me-tab svg {
  stroke: none;
}

.show-me-body {
  margin-top: -1px;
  height: 826px;
  padding: 21px 20px;
  background: var(--card);
  border: 1px solid #ddd;
}

.charts {
  display: grid;
  grid-template-columns: repeat(3, 83px);
  gap: 7px;
  margin-bottom: 24px;
}

.charts button {
  height: 62px;
  background: #fff;
  border: 1px solid #e0e0e0;
}

.charts svg {
  display: block;
  width: 81px;
  height: 60px;
  stroke: none;
}

.show-me h4 {
  font-size: 18px;
  line-height: 28px;
}

.show-me p {
  color: #888;
  line-height: 28px;
  white-space: nowrap;
}

.gray { fill: #f4f4f4; }
.dash { fill: #e6e6e6; }
.green1 { fill: #e1f2e8; }
.green2 { fill: #cce6da; }
.orange1 { fill: #ffead8; }
.orange2 { fill: #fbdcc0; }
.blue1 { fill: #e4f0fa; }
.blue2 { fill: #d9e5f0; }
.blue3 { fill: #cddae7; }
.red1 { fill: #ffdfde; }
.red2 { fill: #f7cfcd; }
.red3 { fill: #ebbfc5; }
.area1 { fill: #fff4e6; }
.area2 { fill: #ffe5cb; }

.frame, .grid { stroke: #e4e4e4; stroke-width: 3; }
.grid { stroke: #d0d0d0; }
.rule { stroke: #eee; stroke-width: 3; }
.ring { stroke: #cddae7; stroke-width: 3; }
.ring.light { stroke: #e4f0fa; }
.line { stroke-width: 4; }
.line.o { stroke: #ffe0c4; }
.line.y { stroke: #fff0d6; }
.line.b { stroke: #cddceb; }
.plus { stroke: #cce6da; stroke-width: 3; }
.whisker { stroke: #c0c0c0; stroke-width: 3; }
.ticks { stroke: #eee; stroke-width: 9; stroke-dasharray: 3 15; }
.ticks.dense { stroke-dasharray: 3 6; }

.num {
  font-size: 15px;
  fill: #d0d0d0;
}
```
